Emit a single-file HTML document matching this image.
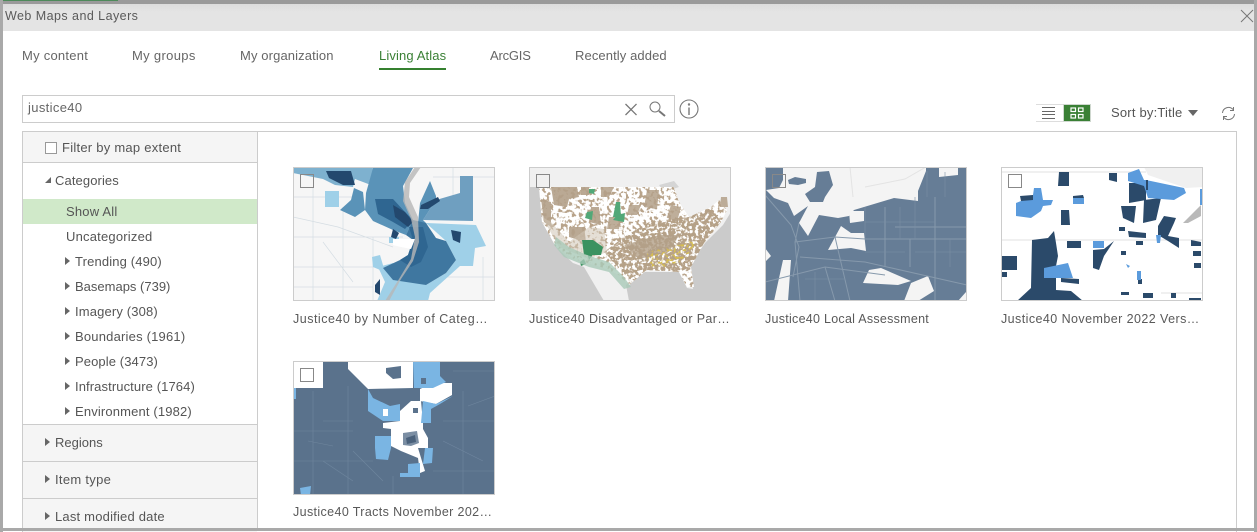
<!DOCTYPE html>
<html><head><meta charset="utf-8">
<style>
html,body{margin:0;padding:0;background:#fff}
body{width:1257px;height:532px;position:relative;overflow:hidden;font-family:"Liberation Sans",sans-serif;color:#555;font-size:13px}
.a{position:absolute}
.t{position:absolute;white-space:nowrap;line-height:16px;letter-spacing:.3px}
.tab{font-size:13px;top:48px;color:#666}
.tri{position:absolute;width:0;height:0;border-left:5px solid #666;border-top:4.5px solid transparent;border-bottom:4.5px solid transparent}
.cap{font-size:12.5px;color:#595959}
.th{position:absolute;width:200px;height:132px;border:1px solid #ccc;overflow:hidden}
.th svg{display:block;position:absolute;left:-1px;top:-1px;filter:blur(.35px)}
.cb{position:absolute;left:6px;top:6px;width:12px;height:12px;border:1px solid #888}
</style></head><body>
<div class="a" style="left:0;top:0;width:1257px;height:4px;background:#9a9a9a"></div>
<div class="a" style="left:0;top:0;width:118px;height:1px;background:#4d8a5a"></div>
<div class="a" style="left:3px;top:4px;width:1251px;height:27px;background:linear-gradient(#dcdcdc,#e4e4e4 30%)"></div>
<div class="a" style="left:0;top:0;width:3px;height:532px;background:#a9a9a9"></div>
<div class="a" style="left:1254px;top:0;width:3px;height:532px;background:#a9a9a9"></div>
<div class="t" style="left:5px;top:8px;font-size:12.5px;letter-spacing:.45px;color:#5a5a5a">Web Maps and Layers</div>
<svg class="a" style="left:1240px;top:9px" width="14" height="14"><path d="M1 1L13 13M13 1L1 13" stroke="#777" stroke-width="1" fill="none"/></svg>

<div class="t tab" style="left:22px;letter-spacing:.25px">My content</div>
<div class="t tab" style="left:132px;letter-spacing:.33px">My groups</div>
<div class="t tab" style="left:240px;letter-spacing:.12px">My organization</div>
<div class="t tab" style="left:379px;color:#3a8035;letter-spacing:.12px">Living Atlas</div>
<div class="a" style="left:379px;top:68px;width:67px;height:2px;background:#35802f"></div>
<div class="t tab" style="left:490px;letter-spacing:-.2px">ArcGIS</div>
<div class="t tab" style="left:575px;letter-spacing:.1px">Recently added</div>

<div class="a" style="left:22px;top:95px;width:651px;height:26px;border:1px solid #ccc"></div>
<div class="t" style="left:28px;top:100px;font-size:13px;letter-spacing:.35px;color:#666">justice40</div>
<svg class="a" style="left:622px;top:100px" width="54" height="20" fill="none" stroke="#777"><path d="M3.500 4L14.500 15M14.500 4L3.500 15" stroke-width="1.300"/><circle cx="33" cy="7" r="5"/><path d="M37 11L43 16" stroke-width="2"/></svg>
<svg class="a" style="left:679px;top:99px" width="21" height="21" fill="none" stroke="#777"><circle cx="10" cy="10" r="9" stroke-width="1.100"/><path d="M10 8.500V16" stroke-width="1.400"/><circle cx="10" cy="5.500" r=".7"/></svg>

<div class="a" style="left:1036px;top:104px;width:27px;height:18px;border-top:1px solid #ddd;border-bottom:1px solid #ddd;box-sizing:border-box"></div>
<svg class="a" style="left:1042px;top:107px" width="14" height="13" stroke="#666"><path d="M0 .5H13M0 4.500H13M0 7.500H13M0 11.500H13"/></svg>
<div class="a" style="left:1063px;top:104px;width:28px;height:18px;background:#3a8035;border:1px solid #cfd8cf;box-sizing:border-box"></div>
<svg class="a" style="left:1070px;top:107px" width="14" height="13" fill="none" stroke="#fff" stroke-width="1.200"><rect x="1" y="1" width="4.500" height="3.500"/><rect x="8.500" y="1" width="4.500" height="3.500"/><rect x="1" y="7.500" width="4.500" height="3.500"/><rect x="8.500" y="7.500" width="4.500" height="3.500"/></svg>
<div class="t" style="left:1111px;top:105px;font-size:13px;letter-spacing:.2px;color:#555">Sort by:Title</div>
<div class="a" style="left:1188px;top:110px;width:0;height:0;border-top:6px solid #666;border-left:5px solid transparent;border-right:5px solid transparent"></div>
<svg class="a" style="left:1221px;top:106px" width="15" height="15" fill="none" stroke="#777"><path d="M1.500 7A6 6 0 0 1 12 3.500M13.500 8A6 6 0 0 1 3 11.500"/><path d="M12.500 1V4.500H9M2.500 14V10.500H6"/></svg>

<div class="a" style="left:22px;top:131px;width:1213px;height:400px;border:1px solid #ccc;border-bottom:0"></div>
<div class="a" style="left:23px;top:132px;width:234px;height:30px;background:#f5f5f5;border-bottom:1px solid #ccc"></div>
<div class="a" style="left:257px;top:132px;width:1px;height:399px;background:#ccc"></div>
<div class="a" style="left:45px;top:142px;width:10px;height:10px;border:1px solid #999;background:#fff"></div>
<div class="t" style="left:62px;top:140px;letter-spacing:.25px">Filter by map extent</div>
<div class="a" style="left:45px;top:177px;width:0;height:0;border-bottom:6px solid #666;border-left:6px solid transparent"></div>
<div class="t" style="left:55px;top:173px;letter-spacing:.1px">Categories</div>
<div class="a" style="left:23px;top:199px;width:234px;height:25px;background:#d0e9c9"></div>
<div class="t" style="left:66px;top:204px;letter-spacing:.2px">Show All</div>
<div class="t" style="left:66px;top:229px;letter-spacing:.2px">Uncategorized</div>
<div class="tri" style="left:65px;top:257px"></div><div class="t" style="left:75px;top:254px;letter-spacing:.15px">Trending (490)</div>
<div class="tri" style="left:65px;top:282px"></div><div class="t" style="left:75px;top:279px;letter-spacing:0">Basemaps (739)</div>
<div class="tri" style="left:65px;top:307px"></div><div class="t" style="left:75px;top:304px;letter-spacing:.15px">Imagery (308)</div>
<div class="tri" style="left:65px;top:332px"></div><div class="t" style="left:75px;top:329px;letter-spacing:.2px">Boundaries (1961)</div>
<div class="tri" style="left:65px;top:357px"></div><div class="t" style="left:75px;top:354px;letter-spacing:.1px">People (3473)</div>
<div class="tri" style="left:65px;top:382px"></div><div class="t" style="left:75px;top:379px;letter-spacing:.1px">Infrastructure (1764)</div>
<div class="tri" style="left:65px;top:407px"></div><div class="t" style="left:75px;top:404px;letter-spacing:.15px">Environment (1982)</div>
<div class="a" style="left:23px;top:424px;width:234px;height:107px;background:#f5f5f5;border-top:1px solid #ccc"></div>
<div class="a" style="left:23px;top:461px;width:234px;height:1px;background:#ccc"></div>
<div class="a" style="left:23px;top:498px;width:234px;height:1px;background:#ccc"></div>
<div class="tri" style="left:45px;top:438px"></div><div class="t" style="left:55px;top:435px;letter-spacing:0">Regions</div>
<div class="tri" style="left:45px;top:475px"></div><div class="t" style="left:55px;top:472px">Item type</div>
<div class="tri" style="left:45px;top:512px"></div><div class="t" style="left:55px;top:509px;letter-spacing:.2px">Last modified date</div>

<!-- Map 1 -->
<div class="th" style="left:293px;top:167px"><svg width="202" height="134" viewBox="0 0 202 134">
<rect width="202" height="134" fill="#f6f6f6"/>
<g fill="none" stroke="#d5dde3" stroke-width=".7"><path d="M0 30H60M20 20V134M0 70H110M50 40V134M0 100H90M80 70V134M0 120H80M150 110H202M190 90V134M160 0V30M140 10H202M0 50L45 60L100 80M30 75L60 115"/></g>
<path fill="#9fd0e8" d="M84 134L92 115L85 100L100 96L110 112L133 118L153 106L163 93L153 74L133 56L183 58L193 79L182 81L180 99L167 99L137 126L135 134Z"/>
<path fill="#9fd0e8" d="M32 24H46V40H32ZM91 11H103L105 20L96 24ZM96 70H106V76H96ZM79 90L87 88L92 105L80 100Z"/>
<path fill="#6f9fc0" d="M130 53L143 33L167 26L167 9H180V54Z"/>
<path fill="#7eb1cf" d="M0 0H80L78 18L62 12L60 20L42 18L30 12L0 6Z"/>
<path fill="#5a93b8" d="M73 26L80 1H120L110 19L112 36L120 53L113 68L100 63L80 54L72 43ZM61 21L70 25L72 43L62 50L47 43L58 33ZM127 36L137 14L143 29L143 33L130 53L133 56L125 56Z"/>
<path fill="#3f77a0" d="M120 53L133 56L143 71L153 74L163 93L153 106L133 118L100 113L90 101L107 93L115 88L120 73L113 68Z"/>
<path fill="#2f6691" d="M116 60L130 60L135 80L128 95L118 100L107 93L115 88L120 73ZM82 32L100 32L112 45L120 53L112 62L100 55L85 47Z"/>
<path fill="#23486e" d="M100 38L112 45L120 55L115 60L102 50ZM128 38L145 30L147 34L135 42L127 42ZM33 4L58 4L62 18L50 18L36 11ZM158 63L168 65L167 76L160 73ZM100 62L106 66L103 72L98 70ZM82 118L87 112L87 128L82 125Z"/>
<path fill="#fff" d="M100 72L122 72L118 82L108 80L100 78Z"/>
<path fill="#b7b7b7" d="M92 134L106 112L118 92L122 70L118 52L110 34L112 15L122 0H128L117 16L116 30L125 50L126 75L120 94L108 112L96 134Z" opacity=".8"/>
</svg><div class="cb"></div></div>

<!-- Map 2 -->
<div class="th" style="left:529px;top:167px"><svg width="202" height="134" viewBox="0 0 202 134">
<defs>
<filter id="n1" x="0" y="0" width="100%" height="100%" color-interpolation-filters="sRGB"><feTurbulence type="fractalNoise" baseFrequency=".28" numOctaves="2" seed="3"/><feColorMatrix values="0 0 0 0 .72 0 0 0 0 .64 0 0 0 0 .54 9 0 0 0 -4.700"/></filter>
<filter id="n2" x="0" y="0" width="100%" height="100%" color-interpolation-filters="sRGB"><feTurbulence type="fractalNoise" baseFrequency=".3" numOctaves="2" seed="8"/><feColorMatrix values="0 0 0 0 .71 0 0 0 0 .63 0 0 0 0 .53 9 0 0 0 -3.800"/></filter>
<filter id="n3" x="0" y="0" width="100%" height="100%" color-interpolation-filters="sRGB"><feTurbulence type="fractalNoise" baseFrequency=".4" numOctaves="1" seed="5"/><feColorMatrix values="0 0 0 0 .84 0 0 0 0 .74 0 0 0 0 .32 9 0 0 0 -4.800"/></filter>
<clipPath id="us"><path d="M10 20H145L150 35L160 50L182 40L190 33L198 43L192 55L175 76L162 100L165 120L158 120L150 105L118 103L100 118L88 107L72 100L45 92L27 80L13 55Z"/></clipPath>
<clipPath id="se"><path d="M75 85L95 70L120 55L160 50L182 40L192 55L175 76L162 100L150 105L118 103L100 112Z"/></clipPath>
<clipPath id="yl"><path d="M118 85L150 78L168 72L160 90L140 100L120 100Z"/></clipPath>
</defs>
<rect width="202" height="134" fill="#f0f0f0"/>
<path fill="#cbcbcb" d="M0 20H10L13 55L27 80L45 97L60 120L70 134H0Z"/>
<path fill="#cbcbcb" d="M202 45L194 58L176 76L160 100L164 122L158 121L150 105L115 105L97 118L100 134H202Z"/>
<path fill="#cbcbcb" d="M44 96L55 100L75 134H68Z"/>
<path fill="#d5d5d5" d="M130 18L145 14L150 20L135 25Z"/>
<path fill="#fff" clip-path="url(#us)" d="M0 0H202V134H0Z"/>
<g clip-path="url(#us)"><rect width="202" height="134" filter="url(#n1)"/></g>
<g clip-path="url(#se)"><rect width="202" height="134" filter="url(#n2)"/></g>
<path fill="#b3a088" d="M22 20H48L50 30L40 32L38 40L25 38ZM12 32L22 35L22 60L15 55ZM52 20H60V28H52ZM62 40H70L72 58L60 55ZM40 60L55 60L57 75L40 70Z" opacity=".9"/>
<path fill="#b3a088" d="M80 50H92L90 62L78 62ZM100 38H112L108 48H98ZM118 23H130L128 42L115 40ZM72 20H85L80 30H72ZM142 38L152 40L148 55L138 50ZM192 30L198 30L199 40L191 40Z" opacity=".85"/>
<path fill="#b3a088" d="M95 78L130 68L150 68L140 85L110 92Z" opacity=".8"/>
<path fill="#d0c5b5" d="M13 50L30 80L60 92L78 85L75 62L60 60L40 75L22 55Z" opacity=".55"/>
<path fill="#3b9260" d="M53 73L64 73L74 80L72 88L55 88Z"/>
<path fill="#52a878" d="M87 35L91 35L92 50L84 50ZM58 45L64 44L63 53L56 51ZM60 22H66L65 27L60 26ZM88 48L96 46L95 55L84 53Z"/>
<path fill="#3b9260" d="M51 95L55 92L57 97L52 99ZM58 86L65 86L60 93Z"/>
<path fill="#a9c9b8" d="M27 70L40 80L58 88L80 95L95 110L102 120L95 122L80 105L60 100L35 90L25 78Z" opacity=".8"/>
<g clip-path="url(#yl)"><rect width="202" height="134" filter="url(#n3)"/></g>
</svg><div class="cb"></div></div>

<!-- Map 3 -->
<div class="th" style="left:765px;top:167px"><svg width="202" height="134" viewBox="0 0 202 134">
<rect width="202" height="134" fill="#667d96"/>
<path fill="#f4f4f4" d="M1 23L14 21L18 13L18 0H161V4L153 24L153 34L129 31L89 43L84 49L73 51L54 48L43 69L34 56L43 39L29 49L23 36L9 31Z"/>
<path fill="#f4f4f4" d="M174 0H193V8L174 10Z"/>
<path fill="#667d96" d="M23 13L30 10L41 12L41 16L33 18L24 17ZM40 27L50 20L52 5L64 4L68 18L60 30L58 35L45 35Z"/>
<path fill="#f4f4f4" d="M84 44L99 44L99 54L85 56ZM63 83L76 59L86 66L99 66L101 84L86 81ZM98 116L104 103L116 101L146 114L133 118ZM139 134L146 116L163 109L169 124L153 134ZM18 93L26 93L23 134L9 134ZM0 81L6 89L0 95ZM193 134L201 125V134Z"/>
<path fill="none" stroke="#8699ac" stroke-width="1" d="M0 28L26 58L34 80L28 110M34 56L30 75L35 134M30 75L70 70L100 72L202 72M120 40V100M170 30V134M0 115L60 100L120 108M35 90L100 95L202 118M70 70L85 134M130 60H202M145 72V100M60 100L70 134"/>
<path fill="none" stroke="#7b90a4" stroke-width=".6" d="M100 55H170M100 40V72M135 40V72M150 30V72M50 105V134M40 112H80M180 85H202M185 72V100M150 85H180M100 85H140M162 4V30M180 5V30"/>
<path fill="none" stroke="#e3e3e3" stroke-width="1" d="M100 20L140 12L161 0M85 0L88 30"/>
</svg><div class="cb"></div></div>

<!-- Map 4 -->
<div class="th" style="left:1001px;top:167px"><svg width="202" height="134" viewBox="0 0 202 134">
<rect width="202" height="134" fill="#fff"/>
<path fill="#f0f0f0" d="M143 0H202V20L185 21L147 8Z"/>
<path fill="none" stroke="#e6e6e6" stroke-width="1.200" d="M0 73H202M0 5H145M160 126H202"/>
<path fill="#2b4a6a" d="M58 5H68V19L57 19ZM108 6H116V15L108 13ZM128 16H145V33L128 36ZM143 33L160 31L155 53L142 56ZM120 39H135L133 56L122 51ZM60 43H68L69 58H60ZM31 73L47 71L53 64L55 76L57 89L55 99L55 123L70 124L82 134H16L30 121ZM66 74H80V81H66ZM92 83L103 82L113 74L103 89L98 103L92 101ZM1 89H16V103H1ZM157 59L163 49L175 51L173 56L167 69L178 71L178 81L167 74L157 68ZM127 64L145 66L145 71L128 70ZM118 60H124V64H118ZM190 73L200 75V79L190 79ZM192 84H200V89H192ZM193 96H200V101H193ZM142 126H152V131L142 131ZM170 126H175V131H170ZM188 131H200V134H188ZM135 74H142V78H135ZM120 84H125V88H120ZM137 112H141V117H137ZM0 105H6V110H0ZM120 125H128V128H120Z"/>
<path fill="#5b9bdc" d="M127 6L138 2L143 13L145 13L183 21L185 26L173 33L147 31L143 19L127 14ZM15 36L20 34L32 28L33 21L40 21L42 33L52 33L50 38L42 39L40 44L30 51L15 49ZM72 31L83 31V37H72ZM92 74H103V81H92ZM43 101L67 96L72 111L43 111ZM155 68L160 68L159 76L156 76ZM199 22H202V38H199ZM125 97L129 99L127 101ZM136 104H140V113H136Z"/>
<path fill="#2b4a6a" d="M19 29L32 28L32 33L20 34ZM72 29L82 28L83 31H72ZM60 111L78 112V117L60 115ZM145 18V23H147V13H145Z"/>
<path fill="#b9b9b9" d="M182 56L200 38V49L187 56Z"/>
</svg><div class="cb" style="background:#fff"></div></div>

<!-- Map 5 -->
<div class="th" style="left:293px;top:361px"><svg width="202" height="134" viewBox="0 0 202 134">
<rect width="202" height="134" fill="#5a728c"/>
<path fill="none" stroke="#6f869e" stroke-width=".6" d="M20 30V134M55 25V134M0 70H60M0 100H80M150 60H202M170 30V134M140 110H202M60 90L90 120M150 80L190 100M30 60H60M160 10H202M175 45L202 35M100 115V134M15 80L40 85M30 100L60 120"/>
<path fill="#fff" d="M0 0H30V27H0ZM55 0H120V27L75 28L55 8ZM140 22H159V34L143 43L127 40V28ZM107 50L118 40L128 40L130 62L130 68L135 77L135 87L125 87L132 110L127 112L125 97L108 90L98 85L98 68L90 67L90 62L107 60Z"/>
<path fill="#5a728c" d="M93 7L108 5L108 17L100 18L93 12Z"/>
<path fill="#7ab5e3" d="M120 0H147V15L153 21L140 27L121 27ZM75 28L80 37L97 45L107 43V60H90L75 50ZM130 40L143 43L160 35L147 43L138 48L138 62L128 62ZM82 75H98V87L95 99L83 98L82 87ZM132 87H140L139 102L130 103ZM115 103L127 102V116H107V112H115ZM0 27H3V38H0ZM7 127L18 125L17 134H8Z"/>
<path fill="#fff" d="M90 48H95V55H90Z"/>
<path fill="#5a728c" d="M128 17H133V23H128ZM120 47H125V52H120Z"/>
<path fill="#5a728c" opacity=".8" d="M110 72L124 70L126 82L118 85L110 84Z"/>
<path fill="#4a617b" d="M113 77L122 74L123 81L114 83Z"/>
</svg><div class="cb"></div></div>

<div class="t cap" style="left:293px;top:311px;letter-spacing:.5px">Justice40 by Number of Categ…</div>
<div class="t cap" style="left:529px;top:311px;letter-spacing:.37px">Justice40 Disadvantaged or Par…</div>
<div class="t cap" style="left:765px;top:311px;letter-spacing:.27px">Justice40 Local Assessment</div>
<div class="t cap" style="left:1001px;top:311px;letter-spacing:.43px">Justice40 November 2022 Vers…</div>
<div class="t cap" style="left:293px;top:504px;letter-spacing:.37px">Justice40 Tracts November 202…</div>

<div class="a" style="left:0;top:528px;width:1257px;height:3px;background:#a9a9a9"></div>
</body></html>
